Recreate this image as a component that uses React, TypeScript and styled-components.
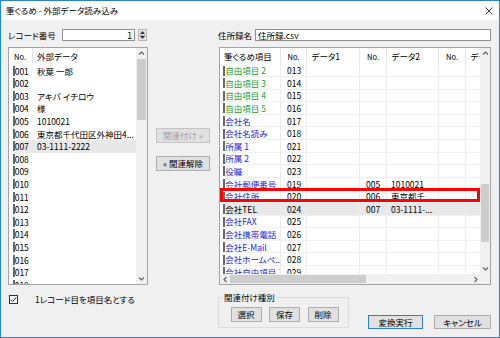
import React from "react";
import styled, { createGlobalStyle } from "styled-components";

const GlobalStyle = createGlobalStyle`
  html, body {
    margin: 0;
    padding: 0;
    background: #fff;
  }
  body {
    font-family: "Noto Sans CJK JP", "Noto Sans", sans-serif;
    font-size: 8.5px;
    font-feature-settings: "palt";
    color: #000;
  }
  * {
    box-sizing: border-box;
  }
`;

type Kind = "free" | "company" | "plain";

interface GridRowType {
  item: string;
  no: string;
  kind: Kind;
  no2?: string;
  data2?: string;
  selected?: boolean;
}

const leftRows = [
  { no: "001", text: "秋葉 一郎" },
  { no: "002", text: "" },
  { no: "003", text: "アキバ イチロウ" },
  { no: "004", text: "様" },
  { no: "005", text: "1010021" },
  { no: "006", text: "東京都千代田区外神田4..." },
  { no: "007", text: "03-1111-2222", selected: true },
  ...Array.from({ length: 11 }, (_, i) => ({
    no: String(8 + i).padStart(3, "0"),
    text: "",
  })),
];

const gridRows: GridRowType[] = [
  { item: "自由項目 2", no: "013", kind: "free" },
  { item: "自由項目 3", no: "014", kind: "free" },
  { item: "自由項目 4", no: "015", kind: "free" },
  { item: "自由項目 5", no: "016", kind: "free" },
  { item: "会社名", no: "017", kind: "company" },
  { item: "会社名読み", no: "018", kind: "company" },
  { item: "所属 1", no: "021", kind: "company" },
  { item: "所属 2", no: "022", kind: "company" },
  { item: "役職", no: "023", kind: "company" },
  { item: "会社郵便番号", no: "019", kind: "company", no2: "005", data2: "1010021" },
  { item: "会社住所", no: "020", kind: "company", no2: "006", data2: "東京都千..." },
  { item: "会社TEL", no: "024", kind: "plain", no2: "007", data2: "03-1111-...", selected: true },
  { item: "会社FAX", no: "025", kind: "company" },
  { item: "会社携帯電話", no: "026", kind: "company" },
  { item: "会社E-Mail", no: "027", kind: "company" },
  { item: "会社ホームペ...", no: "028", kind: "company" },
  { item: "会社自由項目 1", no: "029", kind: "company" },
];

// column widths of the right grid (first one holds the row marker)
const COLS = [61, 26, 53, 27, 52, 27, 40];
const ROW_H = 12.6;
const MARKED_ROW = 10;

const kindColor: Record<Kind, string> = {
  free: "#1f9a1f",
  company: "#2424e0",
  plain: "#000",
};

const Chevron: React.FC<{ dir: "up" | "down" | "left" | "right" }> = ({ dir }) => {
  const pts = {
    up: "1,4.5 3.5,2 6,4.5",
    down: "1,2.5 3.5,5 6,2.5",
    left: "4.5,1 2,3.5 4.5,6",
    right: "2.5,1 5,3.5 2.5,6",
  }[dir];
  return (
    <svg width="7" height="7" viewBox="0 0 7 7">
      <polyline points={pts} fill="none" stroke="#606060" strokeWidth="1.1" />
    </svg>
  );
};

const App: React.FC = () => {
  return (
    <>
      <GlobalStyle />
      <Window>
        <TitleBar>
          <Title>筆ぐるめ - 外部データ読み込み</Title>
          <svg width="8" height="8" viewBox="0 0 8 8">
            <path d="M0.5 0.5 L7.5 7.5 M7.5 0.5 L0.5 7.5" stroke="#222" strokeWidth="0.9" />
          </svg>
        </TitleBar>

        <Body>
          <TopField>
            <FieldLabel $width={54}>レコード番号</FieldLabel>
            <TextBox $align="right" style={{ width: 73 }}>1</TextBox>
            <Spinner>
              <SpinBtn>
                <svg width="5" height="3" viewBox="0 0 5 3">
                  <polygon points="0,3 2.5,0 5,3" fill="#333" />
                </svg>
              </SpinBtn>
              <SpinBtn>
                <svg width="5" height="3" viewBox="0 0 5 3">
                  <polygon points="0,0 2.5,3 5,0" fill="#333" />
                </svg>
              </SpinBtn>
            </Spinner>
          </TopField>
          <div />
          <TopField>
            <FieldLabel $width={37} style={{ marginLeft: -1 }}>住所録名</FieldLabel>
            <TextBox $align="left">住所録.csv</TextBox>
          </TopField>

          {/* left list */}
          <ListBox>
            <ListContent>
              <ListHeader>
                <ListHeadNo>No.</ListHeadNo>
                <ListHeadText>外部データ</ListHeadText>
              </ListHeader>
              {leftRows.map((r) => (
                <Row key={r.no}>
                  <Marker />
                  <RowCells $selected={r.selected}>
                    <ListNo>{r.no}</ListNo>
                    <ListText>{r.text}</ListText>
                  </RowCells>
                </Row>
              ))}
            </ListContent>
            <VScroll $width={11}>
              <ArrowBox $size={11}><Chevron dir="up" /></ArrowBox>
              <Track>
                <VThumb $offset={0} $length={61} />
              </Track>
              <ArrowBox $size={11}><Chevron dir="down" /></ArrowBox>
            </VScroll>
          </ListBox>

          <MiddleCol>
            <Button $width={54} disabled>関連付け »</Button>
            <Button $width={54}>« 関連解除</Button>
          </MiddleCol>

          {/* right grid */}
          <GridBox>
            <GridMain>
              <GridContent>
                <GridHeader>
                  {["筆ぐるめ項目", "No.", "データ1", "No.", "データ2", "No.", "データ3"].map((h, i) => (
                    <HeadCell key={i} $w={COLS[i]} $center={h === "No."} $first={i === 0}>
                      {h === "No." ? <SmallNo>No.</SmallNo> : h}
                    </HeadCell>
                  ))}
                </GridHeader>
                <GridRows>
                  {gridRows.map((r) => (
                    <Row key={r.no}>
                      <Marker style={{ marginLeft: 2.7 }} />
                      <RowCells $selected={r.selected} $lined>
                        <ItemCell $w={COLS[0] - 4.7} $color={kindColor[r.kind]}>{r.item}</ItemCell>
                        <Cell $w={COLS[1]}>{r.no}</Cell>
                        <Cell $w={COLS[2]} />
                        <Cell $w={COLS[3]}>{r.no2}</Cell>
                        <Cell $w={COLS[4]} $pad={4}>{r.data2}</Cell>
                        <Cell $w={COLS[5]} />
                        <Cell $w={COLS[6]} />
                      </RowCells>
                    </Row>
                  ))}
                  <RedMark style={{ top: MARKED_ROW * ROW_H - 2 }} />
                </GridRows>
              </GridContent>
              <VScroll $width={10}>
                <ArrowBox $size={11}><Chevron dir="up" /></ArrowBox>
                <Track>
                  <VThumb $offset={125} $length={58} />
                </Track>
                <ArrowBox $size={11}><Chevron dir="down" /></ArrowBox>
              </VScroll>
            </GridMain>
            <HScrollRow>
              <ArrowBox $size={10}><Chevron dir="left" /></ArrowBox>
              <HTrack>
                <HThumb $length={136} />
              </HTrack>
              <ArrowBox $size={10}><Chevron dir="right" /></ArrowBox>
              <Corner />
            </HScrollRow>
          </GridBox>

          <CheckRow>
            <CheckBox>
              <svg width="7" height="7" viewBox="0 0 7 7">
                <polyline points="0.8,3.6 2.7,5.5 6.3,1.4" fill="none" stroke="#222" strokeWidth="1" />
              </svg>
            </CheckBox>
            <CheckLabel>1レコード目を項目名とする</CheckLabel>
          </CheckRow>
          <div />
          <BottomRight>
            <Group>
              <Legend>関連付け種別</Legend>
              <GroupButtons>
                <Button $width={31}>選択</Button>
                <Button $width={31}>保存</Button>
                <Button $width={31}>削除</Button>
              </GroupButtons>
            </Group>
            <Actions>
              <Button $width={55} $height={14} $primary>変換実行</Button>
              <Button $width={57} $height={14}>キャンセル</Button>
            </Actions>
          </BottomRight>
        </Body>
      </Window>
    </>
  );
};

const Window = styled.div`
  width: 500px;
  height: 338px;
  border: 1px solid #2a84d2;
  display: flex;
  flex-direction: column;
  background: #f0f0f0;
`;

const TitleBar = styled.div`
  height: 19px;
  flex-shrink: 0;
  background: #fff;
  display: flex;
  align-items: center;
  justify-content: space-between;
  padding: 0 6px 0 5px;
`;

const Title = styled.span`
  line-height: 1;
`;

const Body = styled.div`
  flex: 1;
  display: grid;
  grid-template-columns: 140px 71px 272px;
  grid-template-rows: 18px 238px 1fr;
  padding: 9px 8px 0 7px;
`;

const TopField = styled.div`
  display: flex;
  align-items: center;
  height: 12px;
`;

const FieldLabel = styled.span<{ $width: number }>`
  width: ${(p) => p.$width}px;
  flex-shrink: 0;
  white-space: nowrap;
`;

const TextBox = styled.div<{ $align: "left" | "right" }>`
  flex: ${(p) => (p.$align === "left" ? 1 : "none")};
  height: 12px;
  background: #fff;
  border: 1px solid #8f8f8f;
  line-height: 10px;
  padding: 0 2px;
  text-align: ${(p) => p.$align};
`;

const Spinner = styled.div`
  display: flex;
  flex-direction: column;
  margin-left: 3px;
  width: 9px;
  height: 12px;
`;

const SpinBtn = styled.div`
  flex: 1;
  display: flex;
  align-items: center;
  justify-content: center;
  background: #e6e6e6;
  border: 1px solid #b5b5b5;
  & + & {
    border-top: none;
  }
`;

const ListBox = styled.div`
  display: flex;
  height: 238px;
  background: #fff;
  border: 1px solid #a3a3a3;
  overflow: hidden;
`;

const ListContent = styled.div`
  flex: 1;
  min-width: 0;
  display: flex;
  flex-direction: column;
  overflow: hidden;
`;

const ListHeader = styled.div`
  display: flex;
  height: 16.4px;
  flex-shrink: 0;
  align-items: center;
`;

const ListHeadNo = styled.div`
  width: 24px;
  height: 100%;
  display: flex;
  align-items: center;
  padding-left: 5px;
  font-size: 7.5px;
  border-right: 1px solid #e3e3e3;
`;

const ListHeadText = styled.div`
  padding-left: 4px;
`;

const Row = styled.div`
  display: flex;
  align-items: center;
  height: ${ROW_H}px;
  flex-shrink: 0;
`;

const Marker = styled.span`
  width: 2px;
  height: 10px;
  margin-left: 3.7px;
  flex-shrink: 0;
  background: #686868;
`;

const RowCells = styled.div<{ $selected?: boolean; $lined?: boolean }>`
  flex: 1;
  min-width: 0;
  height: 100%;
  display: flex;
  align-items: center;
  background: ${(p) => (p.$selected ? "#e8e8e8" : "transparent")};
  border-bottom: ${(p) => (p.$lined ? "1px solid #f0f0f0" : "none")};
`;

const ListNo = styled.span`
  width: 18.3px;
  flex-shrink: 0;
`;

const ListText = styled.span`
  padding-left: 4px;
  white-space: nowrap;
  overflow: hidden;
`;

const VScroll = styled.div<{ $width: number }>`
  width: ${(p) => p.$width}px;
  flex-shrink: 0;
  display: flex;
  flex-direction: column;
  background: #f0f0f0;
`;

const ArrowBox = styled.div<{ $size: number }>`
  width: ${(p) => p.$size}px;
  height: ${(p) => p.$size}px;
  flex-shrink: 0;
  display: flex;
  align-items: center;
  justify-content: center;
  background: #f0f0f0;
`;

const Track = styled.div`
  flex: 1;
  display: flex;
  flex-direction: column;
  align-items: stretch;
`;

const VThumb = styled.div<{ $offset: number; $length: number }>`
  margin-top: ${(p) => p.$offset}px;
  height: ${(p) => p.$length}px;
  margin-left: 1px;
  margin-right: 1px;
  background: #cdcdcd;
`;

const MiddleCol = styled.div`
  display: flex;
  flex-direction: column;
  gap: 13px;
  padding: 81px 0 0 8px;
`;

const Button = styled.button<{ $width: number; $height?: number; $primary?: boolean }>`
  width: ${(p) => p.$width}px;
  height: ${(p) => p.$height ?? 15}px;
  padding: 0;
  font: inherit;
  line-height: 1;
  color: #000;
  background: #e1e1e1;
  border: 1px solid ${(p) => (p.$primary ? "#2a7fd0" : "#adadad")};
  white-space: nowrap;
  &:disabled {
    color: #a2a2a2;
    background: #e0e0e0;
    border-color: #c4c4c4;
  }
`;

const GridBox = styled.div`
  height: 238px;
  display: flex;
  flex-direction: column;
  background: #fff;
  border: 1px solid #a3a3a3;
  overflow: hidden;
`;

const GridMain = styled.div`
  flex: 1;
  min-height: 0;
  display: flex;
`;

const GridContent = styled.div`
  flex: 1;
  min-width: 0;
  display: flex;
  flex-direction: column;
  overflow: hidden;
`;

const GridHeader = styled.div`
  display: flex;
  height: 16.4px;
  flex-shrink: 0;
`;

const HeadCell = styled.div<{ $w: number; $center?: boolean; $first?: boolean }>`
  width: ${(p) => p.$w}px;
  flex-shrink: 0;
  display: flex;
  align-items: center;
  justify-content: ${(p) => (p.$center ? "center" : "flex-start")};
  padding-left: ${(p) => (p.$center ? 0 : p.$first ? 4 : 4.5)}px;
  border-right: 1px solid #e5e5e5;
  white-space: nowrap;
  overflow: hidden;
`;

const SmallNo = styled.span`
  font-size: 7.5px;
`;

const GridRows = styled.div`
  position: relative;
  flex: 1;
  display: flex;
  flex-direction: column;
  overflow: hidden;
`;

const ItemCell = styled.div<{ $w: number; $color: string }>`
  width: ${(p) => p.$w}px;
  flex-shrink: 0;
  height: 100%;
  display: flex;
  align-items: center;
  padding-left: 0.6px;
  color: ${(p) => p.$color};
  border-right: 1px solid #ececec;
  white-space: nowrap;
  overflow: hidden;
`;

const Cell = styled.div<{ $w: number; $pad?: number }>`
  width: ${(p) => p.$w}px;
  flex-shrink: 0;
  height: 100%;
  display: flex;
  align-items: center;
  padding-left: ${(p) => p.$pad ?? 6}px;
  border-right: 1px solid #ececec;
  white-space: nowrap;
  overflow: hidden;
`;

const RedMark = styled.div`
  position: absolute;
  left: 0;
  right: 0;
  height: 14px;
  border: 3px solid #f00;
  pointer-events: none;
`;

const HScrollRow = styled.div`
  height: 10px;
  flex-shrink: 0;
  display: flex;
  background: #f0f0f0;
`;

const HTrack = styled.div`
  flex: 1;
  display: flex;
  align-items: stretch;
  padding: 1px 0;
`;

const HThumb = styled.div<{ $length: number }>`
  width: ${(p) => p.$length}px;
  background: #cdcdcd;
`;

const Corner = styled.div`
  width: 10px;
  background: #f0f0f0;
`;

const CheckRow = styled.div`
  display: flex;
  align-items: center;
  margin-top: 9px;
  height: 10px;
  padding-left: 1px;
`;

const CheckBox = styled.div`
  width: 9px;
  height: 9px;
  border: 1px solid #333;
  background: #fff;
  display: flex;
  align-items: center;
  justify-content: center;
`;

const CheckLabel = styled.span`
  margin-left: 17px;
  white-space: nowrap;
`;

const BottomRight = styled.div`
  display: flex;
  align-items: flex-start;
`;

const Group = styled.fieldset`
  margin: 6px 0 0 -1px;
  width: 131px;
  height: 37px;
  padding: 0 4px;
  border: 1px solid #dcdcdc;
`;

const Legend = styled.legend`
  padding: 0 1px;
  line-height: 12px;
`;

const GroupButtons = styled.div`
  display: flex;
  gap: 7.5px;
  padding-left: 7.5px;
  margin-top: 3.5px;
`;

const Actions = styled.div`
  display: flex;
  gap: 11px;
  margin: 30px 0 0 19px;
`;

export default App;
